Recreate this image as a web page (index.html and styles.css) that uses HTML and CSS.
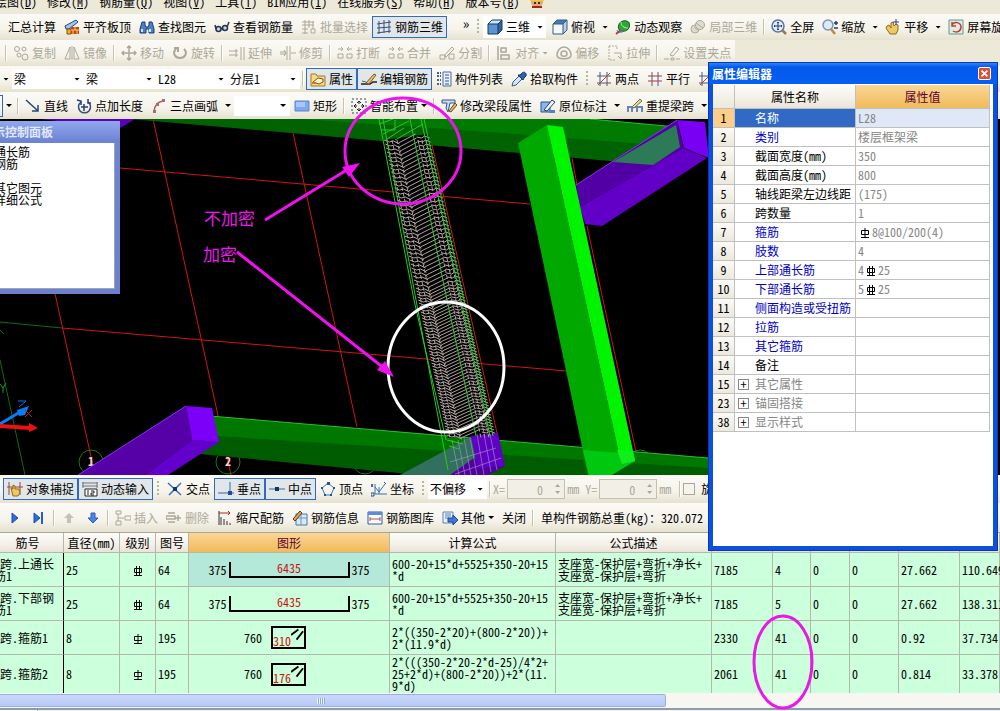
FILE: index.html
```html
<!DOCTYPE html>
<html lang="zh-CN">
<head>
    <meta charset="UTF-8">
    <meta name="viewport" content="width=device-width, initial-scale=1.0">
    <title>钢筋三维</title>
    <link rel="stylesheet" href="styles.css">
</head>
<body>

    <!-- Icon set -->
    <svg class="icon-defs" aria-hidden="true">
        <symbol id="i-level" viewBox="0 0 16 16"><path d="M1 7L12 1l2 2-9 7H2z" fill="#9cc4ee" stroke="#234a86"/><path d="M3 10h4v5H3z" fill="#f5b32a" stroke="#8a4a10"/><path d="M7 8h8v7H7z" fill="#c8401c"/><path d="M7 11h8M11 8v3M9 11v4M13 11v4" stroke="#ffd060"/></symbol>
        <symbol id="i-find" viewBox="0 0 16 16"><path d="M3 3h3v3l1 2h2l1-2V3h3l2 7v4h-5v-4H7v4H1v-4z" fill="#4f7fc4" stroke="#1c3a74"/><path d="M3 10v3M11 10v3" stroke="#cfe3ff" stroke-width="2"/></symbol>
        <symbol id="i-glasses" viewBox="0 0 16 16"><g fill="#c9d6e6" stroke="#26364c" stroke-width="1.5"><circle cx="4.500" cy="10" r="2.500"/><circle cx="11" cy="9" r="2.500"/><path d="M2 10L1 6M13 8l2-5M7 10l2-1" fill="none"/></g></symbol>
        <symbol id="i-batch" viewBox="0 0 16 16"><path d="M1 3h12M1 6h12M4 1v14M8 1v8M12 2v8M1 10h6M1 14h6M10 10h4v4h-4z" fill="none" stroke="currentColor"/></symbol>
        <symbol id="i-rebar3d" viewBox="0 0 16 16"><path d="M3 2v13M8 1v13M13 1v13M1 5l14-2M1 9l14-1M1 14l14-2" fill="none" stroke="#36507c"/></symbol>
        <symbol id="i-cube" viewBox="0 0 16 16"><path d="M1 5h10v10H1z" fill="#5b94cf"/><path d="M1 5l4-4h10l-4 4z" fill="#cfe5f8"/><path d="M11 5l4-4v10l-4 4z" fill="#2f649e"/><path d="M1 5h10v10H1zM1 5l4-4h10l-4 4M15 1v10l-4 4" fill="none" stroke="#18395f"/></symbol>
        <symbol id="i-top" viewBox="0 0 16 16"><path d="M1 5h10v10H1z" fill="#f2f7fc"/><path d="M1 5l4-4h10l-4 4z" fill="#3f7bbd"/><path d="M11 5l4-4v10l-4 4z" fill="#b8cfe6"/><path d="M1 5h10v10H1zM1 5l4-4h10l-4 4M15 1v10l-4 4" fill="none" stroke="#385a80"/></symbol>
        <symbol id="i-orbit" viewBox="0 0 16 16"><ellipse cx="9" cy="7" rx="6" ry="5" fill="#2fa63c" stroke="#136a20" transform="rotate(-35 9 7)"/><path d="M6 3c0 4 3 6 7 6" stroke="#b8f0a0" fill="none"/><path d="M1 15l5-4" stroke="#b04030" stroke-width="2"/><path d="M2 11c0 3 4 3 7 1" stroke="#3a6fd0" fill="none"/></symbol>
        <symbol id="i-part" viewBox="0 0 16 16"><g fill="#dedccf" stroke="currentColor"><circle cx="5" cy="10" r="4"/><circle cx="10" cy="6" r="4.500"/><path d="M6 4l7 5M4 8l5 4" fill="none"/></g></symbol>
        <symbol id="i-full" viewBox="0 0 16 16"><circle cx="7" cy="7" r="6" fill="#e4eefb" stroke="#5673a4" stroke-width="1.500"/><path d="M7 3v8M3 7h8M6 4l1-1 1 1M6 10l1 1 1-1M4 6L3 7l1 1M10 6l1 1-1 1" stroke="#1b3c80" fill="none"/><path d="M11 11l4 4" stroke="#a07840" stroke-width="2.500"/></symbol>
        <symbol id="i-zoom" viewBox="0 0 16 16"><circle cx="6" cy="6" r="5" fill="#dce9f8" stroke="#7f94b4" stroke-width="1.500"/><path d="M9 10l4 5" stroke="#b98a3c" stroke-width="2.500"/><path d="M12 4h4M14 2v4M12 9h4" stroke="#1d3e80" stroke-width="1.500"/></symbol>
        <symbol id="i-pan" viewBox="0 0 16 16"><path d="M2 7l2-1 2 3V4l2-1 1 4 2-2 2 1v5l-2 4H5l-4-6z" fill="#efc862" stroke="#8c6a1c"/><path d="M11 0v6M8 3h6" stroke="#27488a"/></symbol>
        <symbol id="i-spin" viewBox="0 0 16 16"><path d="M1 1h14v14H1z" fill="#d8efe4" stroke="#5b9c8c"/><path d="M4 6c2-4 9-3 9 2s-5 6-8 4M4 3v4h4" fill="none" stroke="#d0342c" stroke-width="1.500"/></symbol>
        <symbol id="i-copy" viewBox="0 0 16 16"><g fill="none" stroke="currentColor"><circle cx="4" cy="4" r="2.500"/><circle cx="11" cy="4" r="2"/><circle cx="6" cy="10" r="2"/><circle cx="12" cy="12" r="3"/></g></symbol>
        <symbol id="i-mirror" viewBox="0 0 16 16"><path d="M6 2v12H1zM10 2v12h5zM8 1v14" fill="none" stroke="currentColor"/></symbol>
        <symbol id="i-move" viewBox="0 0 16 16"><path d="M8 1v14M1 8h14M6 3l2-2 2 2M6 13l2 2 2-2M3 6L1 8l2 2M13 6l2 2-2 2" fill="none" stroke="currentColor" stroke-width="1.500"/></symbol>
        <symbol id="i-rotate" viewBox="0 0 16 16"><path d="M4 4c-4 4-1 9 4 9s8-5 4-9M2 3h4v4" fill="none" stroke="currentColor" stroke-width="2"/></symbol>
        <symbol id="i-extend" viewBox="0 0 16 16"><path d="M0 6h9M0 10h9M7 4v8M12 2v13M15 2v13" fill="none" stroke="currentColor"/></symbol>
        <symbol id="i-trim" viewBox="0 0 16 16"><path d="M0 7h6M0 9h6M7 1v14M10 1v14M11 8h5M4 5l2 3-2 3" fill="none" stroke="currentColor"/></symbol>
        <symbol id="i-break" viewBox="0 0 16 16"><path d="M1 4h5M10 4h5M4 2l2 2-2 2M12 2l-2 2 2 2M1 9h5v4H1zM10 9h5v4h-5z" fill="none" stroke="currentColor"/></symbol>
        <symbol id="i-split" viewBox="0 0 16 16"><path d="M1 10h5v4H1zM10 9h5v5h-5zM5 11l8-9 2 2-8 8z" fill="none" stroke="currentColor"/></symbol>
        <symbol id="i-align" viewBox="0 0 16 16"><path d="M2 1v14M5 3h5v4H5zM5 10h8v4H5z" fill="none" stroke="currentColor" stroke-width="1.500"/></symbol>
        <symbol id="i-offset" viewBox="0 0 16 16"><path d="M1 10c0-4 3-8 7-8s7 4 7 8c0 5-14 5-14 0zM5 9c0-4 6-4 6 0 0 3-6 3-6 0z" fill="none" stroke="currentColor" stroke-width="1.500"/></symbol>
        <symbol id="i-stretch" viewBox="0 0 16 16"><path d="M2 1h8v4M2 1v14h7" fill="none" stroke="currentColor" stroke-dasharray="2 1"/><path d="M7 8h7v6M11 11l3 3" fill="none" stroke="currentColor"/></symbol>
        <symbol id="i-grip" viewBox="0 0 16 16"><path d="M0 14h5M7 13h3v2H7zM12 14h4M6 10l6-8 3 2-6 7z" fill="none" stroke="currentColor"/></symbol>
        <symbol id="i-prop" viewBox="0 0 16 16"><path d="M1 3h5l1 2h8v10H1z" fill="#f7d98a" stroke="#a47a24"/><path d="M3 11l5-4 5 1v3l-4 2z" fill="#fff3cf" stroke="#7a5818"/><path d="M2 12h4" stroke="#d07830" stroke-width="2"/></symbol>
        <symbol id="i-edit" viewBox="0 0 16 16"><path d="M0 13h9l3-2h4" stroke="#222" stroke-width="1.500" fill="none"/><path d="M5 12l8-9 2 1-7 9z" fill="#eac06a" stroke="#7a5a1c"/><path d="M1 10l4 1" stroke="#355fa8"/></symbol>
        <symbol id="i-list" viewBox="0 0 16 16"><path d="M1 2h4M1 5h4M1 9h4M1 13h4" stroke="#45628e" stroke-width="2" stroke-dasharray="2 1"/><path d="M7 1h8v14H7z" fill="#e8f0fb" stroke="#4b6ca0"/><path d="M9 4h4M9 7h4M9 10h4M9 13h4" stroke="#2f57a4"/></symbol>
        <symbol id="i-pick" viewBox="0 0 16 16"><path d="M1 15l1-4 6-6 3 3-6 6z" fill="#d4e8fa" stroke="#37598e"/><path d="M7 4l5 5 1-2 2-2c1-3-2-5-4-3L9 4z" fill="#2a62b4" stroke="#163a70"/></symbol>
        <symbol id="i-twopt" viewBox="0 0 16 16"><path d="M4 1v14M11 1v14M1 5h14M1 12h14" stroke="#4b5a78"/><path d="M2 14L14 2" stroke="#c04038"/></symbol>
        <symbol id="i-parallel" viewBox="0 0 16 16"><path d="M5 1v14M11 1v14" stroke="#4b5a98"/><path d="M1 5h14M1 10h14" stroke="#b03a3a"/></symbol>
        <symbol id="i-line" viewBox="0 0 16 16"><path d="M1 2l11 10M7 13h6V7" fill="none" stroke="#27467e" stroke-width="1.500"/></symbol>
        <symbol id="i-ptlen" viewBox="0 0 16 16"><path d="M5 4a6 6 0 1 0 7 0" fill="none" stroke="#3a4e7a" stroke-width="1.500"/><path d="M8 6v7M5 9h7M1 2l4 1v4M12 1v4h3" stroke="#20407c" stroke-width="1.500" fill="none"/></symbol>
        <symbol id="i-arc" viewBox="0 0 16 16"><path d="M3 14C3 8 7 3 13 3" fill="none" stroke="#c65040" stroke-width="1.500"/><path d="M2 12h3v3H2zM5 5h3v3H5zM11 1h3v3h-3z" fill="#8a7a84"/></symbol>
        <symbol id="i-rect" viewBox="0 0 16 16"><path d="M1 3h14v10H1z" fill="#7fa8ee" stroke="#5a80d0"/><path d="M2 4h9v5H2z" fill="#a8c6f8"/></symbol>
        <symbol id="i-smart" viewBox="0 0 16 16"><path d="M1 1h14v14H1z" fill="none" stroke="#30486e" stroke-dasharray="2 2"/><path d="M8 3v3M8 10v3M3 8h3M10 8h3M6 5l2-2 2 2M6 11l2 2 2-2M5 6L3 8l2 2M11 6l2 2-2 2" stroke="#222" fill="none"/></symbol>
        <symbol id="i-modify" viewBox="0 0 16 16"><path d="M1 2h13v3H9L7 14 5 10l1-5H1z" fill="#c8dcf4" stroke="#30568c"/><path d="M8 13l6-8 2 2-6 7z" fill="#e8b860" stroke="#68481c"/></symbol>
        <symbol id="i-mark" viewBox="0 0 16 16"><path d="M1 4h9v10H1z" fill="#8fb6ea" stroke="#26529c"/><path d="M4 12l8-10 3 2-8 9z" fill="#f4f8ff" stroke="#24406c"/><path d="M9 12h6v3H9z" fill="#5580c0"/></symbol>
        <symbol id="i-span" viewBox="0 0 16 16"><path d="M1 14V9h14v5M5 9v5M10 9v5" fill="none" stroke="#6486b8" stroke-width="2"/><path d="M5 9l8-8 2 2-8 7z" fill="#e4d7a4" stroke="#70704c"/></symbol>
        <symbol id="i-catch" viewBox="0 0 16 16"><path d="M2 1v13M13 1v13M0 6h16" stroke="#a0403c"/><path d="M4 7l2 1V4l2 1v3h4l1 4-2 3H6z" fill="#f0c860" stroke="#8c6a1c"/></symbol>
        <symbol id="i-dyn" viewBox="0 0 16 16"><path d="M0 2h16M0 5h16M1 1v6M15 1v6" stroke="#777"/><path d="M3 8h12v7H3z" fill="#fff" stroke="#222"/><path d="M6 9v5M9 10h3v2H9v2h3" fill="none" stroke="#222"/></symbol>
        <symbol id="i-cross" viewBox="0 0 16 16"><path d="M1 2l13 12M14 2L2 14" stroke="#3470b8" stroke-width="1.500"/><path d="M6 6h4v4H6z" fill="#14346c"/></symbol>
        <symbol id="i-perp" viewBox="0 0 16 16"><path d="M0 12h16M12 1v11" stroke="#3a68a8"/><path d="M10 10h4v4h-4z" fill="#1d4ea4"/></symbol>
        <symbol id="i-mid" viewBox="0 0 16 16"><path d="M0 8h16" stroke="#3a68a8"/><path d="M6 6h4v4H6z" fill="#14346c"/></symbol>
        <symbol id="i-vertex" viewBox="0 0 16 16"><path d="M8 2l6 5-3 7H5L2 7z" fill="none" stroke="#3a78b8"/><path d="M7 1h3v3H7zM13 6h2v2h-2zM1 6h2v2H1zM4 13h2v2H4zM10 13h2v2h-2z" fill="#2454a0"/></symbol>
        <symbol id="i-coord" viewBox="0 0 16 16"><path d="M4 3v10h12M4 6l4 5 6-8M8 6v7" fill="none" stroke="#3470b8"/><path d="M0 3l2 3M2 3L0 6M13 1l2 2M0 12h3v3H0z" fill="none" stroke="#244a88"/></symbol>
        <symbol id="i-next" viewBox="0 0 16 16"><path d="M5 3l6 5-6 5z" fill="#2c6ce0" stroke="#1c4cae"/></symbol>
        <symbol id="i-last" viewBox="0 0 16 16"><path d="M3 3l6 5-6 5z" fill="#2c6ce0" stroke="#1c4cae"/><path d="M11 2v12" stroke="#2c5cc8" stroke-width="2"/></symbol>
        <symbol id="i-up" viewBox="0 0 16 16"><path d="M8 3l5 5h-3v5H6V8H3z" fill="#c4c2b6"/></symbol>
        <symbol id="i-down" viewBox="0 0 16 16"><path d="M8 13l5-5h-3V3H6v5H3z" fill="#4c84ec" stroke="#2a5cc0"/></symbol>
        <symbol id="i-insert" viewBox="0 0 16 16"><path d="M1 1h5v3H1zM1 11h5v4H1zM3 4v7M3 8h6M10 6h6v4h-6z" fill="none" stroke="currentColor"/></symbol>
        <symbol id="i-delete" viewBox="0 0 16 16"><path d="M2 3h7M0 6h9v3H0zM2 12h7M9 8h6M12 5v6" fill="none" stroke="currentColor" stroke-width="1.500"/></symbol>
        <symbol id="i-scale" viewBox="0 0 16 16"><path d="M2 1v14M4 7v8M7 9v6M10 11v4M13 13v2" stroke="#333"/><path d="M2 3h11M11 1l2 2-2 2" stroke="#b82820" fill="none"/></symbol>
        <symbol id="i-info" viewBox="0 0 16 16"><path d="M4 4h11v11H4z" fill="#dbe8f8" stroke="#4474b8"/><path d="M4 8h11M9 4v11" stroke="#6a94cc"/><path d="M1 9l7-8 2 2-7 8z" fill="#d8a850" stroke="#5c3c10"/></symbol>
        <symbol id="i-lib" viewBox="0 0 16 16"><path d="M1 2h14v12H1z" fill="#fff" stroke="#2a5cae"/><path d="M1 2h14v3H1z" fill="#5a8edc"/><path d="M3 9h10M3 7v4M13 7v4" stroke="#b05040"/></symbol>
        <symbol id="i-other" viewBox="0 0 16 16"><path d="M1 2h10v11H1z" fill="#e8f0fc" stroke="#6080b4"/><path d="M3 4h6M3 6h6M3 8h4" stroke="#6080b4"/><path d="M6 8h5V5l5 5-5 5v-3H6z" fill="#3c78dc" stroke="#1c4898"/></symbol>
        <symbol id="rebar1" viewBox="0 0 10 10"><path d="M1.500 2.500h7v4h-7zM5 0v10M1 9.500h8" fill="none" stroke="#000"/></symbol>
        <symbol id="rebar2" viewBox="0 0 10 10"><path d="M1.500 2.500h7v4h-7zM3.500 0v10M6.500 0v10M1 9.500h8" fill="none" stroke="#000"/></symbol>
    </svg>

    <div class="app">
        <nav class="menu">
            <a href="#">绘图(<u>D</u>)</a>
            <a href="#">修改(<u>M</u>)</a>
            <a href="#">钢筋量(<u>Q</u>)</a>
            <a href="#">视图(<u>V</u>)</a>
            <a href="#">工具(<u>T</u>)</a>
            <a href="#">BIM应用(<u>I</u>)</a>
            <a href="#">在线服务(<u>S</u>)</a>
            <a href="#">帮助(<u>H</u>)</a>
            <a href="#">版本号(<u>B</u>)</a>
            <svg class="icon" viewBox="0 0 16 16"><circle cx="8" cy="8" r="6" fill="#e8a878"/><path d="M1 7c1-8 13-8 14 0z" fill="#f4cc20"/><path d="M3 12h10v2H3z" fill="#a02818"/><path d="M5 9h2M9 9h2" stroke="#333" stroke-width="2"/></svg>
        </nav>

        <div class="bar first">
            <button class="tool">汇总计算</button>
            <button class="tool"><svg class="icon"><use href="#i-level"/></svg>平齐板顶</button>
            <button class="tool"><svg class="icon"><use href="#i-find"/></svg>查找图元</button>
            <button class="tool"><svg class="icon"><use href="#i-glasses"/></svg>查看钢筋量</button>
            <button class="tool" disabled><svg class="icon"><use href="#i-batch"/></svg>批量选择</button>
            <button class="tool pressed"><svg class="icon"><use href="#i-rebar3d"/></svg>钢筋三维</button>
            <button class="more" aria-label="更多">»</button>
            <span class="grip"></span>
            <div class="split">
                <button class="tool"><svg class="icon"><use href="#i-cube"/></svg>三维</button>
                <button class="drop" aria-label="三维选项"></button>
            </div>
            <button class="tool"><svg class="icon"><use href="#i-top"/></svg>俯视</button>
            <button class="drop" aria-label="俯视选项"></button>
            <button class="tool"><svg class="icon"><use href="#i-orbit"/></svg>动态观察</button>
            <button class="tool" disabled><svg class="icon"><use href="#i-part"/></svg>局部三维</button>
            <span class="sep"></span>
            <button class="tool"><svg class="icon"><use href="#i-full"/></svg>全屏</button>
            <button class="tool"><svg class="icon"><use href="#i-zoom"/></svg>缩放</button>
            <button class="drop" aria-label="缩放选项"></button>
            <button class="tool"><svg class="icon"><use href="#i-pan"/></svg>平移</button>
            <button class="drop" aria-label="平移选项"></button>
            <button class="tool"><svg class="icon"><use href="#i-spin"/></svg>屏幕旋转</button>
        </div>

        <div class="bar short">
            <span class="sep"></span>
            <button class="tool" disabled><svg class="icon"><use href="#i-copy"/></svg>复制</button>
            <button class="tool" disabled><svg class="icon"><use href="#i-mirror"/></svg>镜像</button>
            <span class="sep"></span>
            <button class="tool" disabled><svg class="icon"><use href="#i-move"/></svg>移动</button>
            <button class="tool" disabled><svg class="icon"><use href="#i-rotate"/></svg>旋转</button>
            <span class="sep"></span>
            <button class="tool" disabled><svg class="icon"><use href="#i-extend"/></svg>延伸</button>
            <button class="tool" disabled><svg class="icon"><use href="#i-trim"/></svg>修剪</button>
            <span class="sep"></span>
            <button class="tool" disabled><svg class="icon"><use href="#i-break"/></svg>打断</button>
            <button class="tool" disabled><svg class="icon"><use href="#i-break"/></svg>合并</button>
            <button class="tool" disabled><svg class="icon"><use href="#i-split"/></svg>分割</button>
            <span class="sep"></span>
            <button class="tool" disabled><svg class="icon"><use href="#i-align"/></svg>对齐<span class="caret"></span></button>
            <button class="tool" disabled><svg class="icon"><use href="#i-offset"/></svg>偏移</button>
            <button class="tool" disabled><svg class="icon"><use href="#i-stretch"/></svg>拉伸</button>
            <span class="sep"></span>
            <button class="tool" disabled><svg class="icon"><use href="#i-grip"/></svg>设置夹点</button>
        </div>

        <div class="bar">
            <button class="drop" aria-label="楼层"></button>
            <div class="combo"><select aria-label="构件类别"><option>梁</option></select><span class="caret"></span></div>
            <div class="combo"><select aria-label="构件类型"><option>梁</option></select><span class="caret"></span></div>
            <div class="combo"><select aria-label="构件名称"><option>L28</option></select><span class="caret"></span></div>
            <div class="combo"><select aria-label="分层"><option>分层1</option></select><span class="caret"></span></div>
            <span class="sep"></span>
            <button class="tool pressed"><svg class="icon"><use href="#i-prop"/></svg>属性</button>
            <button class="tool pressed"><svg class="icon"><use href="#i-edit"/></svg>编辑钢筋</button>
            <button class="tool"><svg class="icon"><use href="#i-list"/></svg>构件列表</button>
            <button class="tool"><svg class="icon"><use href="#i-pick"/></svg>拾取构件</button>
            <span class="grip"></span>
            <button class="tool"><svg class="icon"><use href="#i-twopt"/></svg>两点</button>
            <button class="tool"><svg class="icon"><use href="#i-parallel"/></svg>平行</button>
            <button class="tool" aria-label="点角"><svg class="icon"><use href="#i-twopt"/></svg></button>
        </div>

        <div class="bar draw">
            <span class="cut"></span>
            <button class="drop" aria-label="绘图选项"></button>
            <span class="sep"></span>
            <button class="tool"><svg class="icon"><use href="#i-line"/></svg>直线</button>
            <button class="tool"><svg class="icon"><use href="#i-ptlen"/></svg>点加长度</button>
            <button class="tool"><svg class="icon"><use href="#i-arc"/></svg>三点画弧</button>
            <button class="drop" aria-label="画弧选项"></button>
            <div class="combo narrow"><select aria-label="半径"><option></option></select><span class="caret"></span></div>
            <button class="tool"><svg class="icon"><use href="#i-rect"/></svg>矩形</button>
            <span class="sep"></span>
            <button class="tool"><svg class="icon"><use href="#i-smart"/></svg>智能布置<span class="caret"></span></button>
            <span class="sep"></span>
            <button class="tool"><svg class="icon"><use href="#i-modify"/></svg>修改梁段属性</button>
            <button class="tool"><svg class="icon"><use href="#i-mark"/></svg>原位标注</button>
            <button class="drop" aria-label="标注选项"></button>
            <button class="tool"><svg class="icon"><use href="#i-span"/></svg>重提梁跨</button>
            <button class="drop" aria-label="梁跨选项"></button>
        </div>

        <!-- 3D view -->
        <div class="view">
            <svg class="scene" viewBox="0 119 1000 356" preserveAspectRatio="xMinYMin slice">
                <g fill="none" stroke="#d41414">
                    <path d="M153 119L231 475M290 119L357 427M52 280L95 475M120 168L530 204M62 328L567 371"/>
                    <path d="M572 158l5 27M587 226L636 452"/>
                </g>
                <path d="M0 322L62 328M0 360L25 475M0 330l4 4" fill="none" stroke="#0c6c1c"/>
                <g fill="none" stroke="#1a7a1a">
                    <circle cx="91" cy="462" r="12"/>
                    <circle cx="228" cy="462" r="12"/>
                    <circle cx="365" cy="462" r="12"/>
                    <circle cx="640" cy="462" r="12"/>
                </g>
                <text class="axis-no" x="91" y="466">1</text>
                <text class="axis-no" x="228" y="466">2</text>

                <path d="M40 119h95l-15 9z" fill="#5a00c0"/>
                <!-- top beam -->
                <path d="M130 119H590L677 127L682 147L655 165z" fill="#006200"/>
                <path d="M300 119H590L677 127L681 147L530 135z" fill="#007a00"/>
                <path d="M590 119L677 127" stroke="#20c020"/>
                <!-- right column -->
                <path d="M576 185L677 120L683 148L580 207z" fill="#5200a6"/>
                <path d="M580 207L683 148L707 158L602 226L585 224z" fill="#6200c8"/>
                <path d="M677 120L705 122L709 158L684 148z" fill="#7a00f4"/>
                <path d="M613 162L676 125L680 147L653 165z" fill="#2c7a56"/>
                <path d="M576 185L677 120" stroke="#8a30ff"/>
                <!-- bottom beam -->
                <path d="M210 416L708 458V475H420L200 454z" fill="#005c00"/>
                <path d="M210 416L708 458V468L217 436z" fill="#007800"/>
                <path d="M210 416L708 458" stroke="#30b830"/>
                <!-- sloping beam -->
                <path d="M518 143L547 125L622 468L588 475z" fill="#00a800"/>
                <path d="M547 125L563 127L635 460L622 468z" fill="#00f400"/>
                <path d="M583 450L633 454L635 461L612 475H589z" fill="#00c810"/>
                <path d="M617 450L633 452L635 461L622 464z" fill="#10ee20"/>
                <!-- left column -->
                <path d="M78 475L186 406L192 440L145 475z" fill="#5600a8"/>
                <path d="M145 475L192 440L219 442L168 475z" fill="#6400cc"/>
                <path d="M186 406L212 408L219 442L192 440z" fill="#7c00f8"/>
                <path d="M78 475L186 406" stroke="#8a30ff"/>
                <!-- middle column -->
                <path d="M400 475L472 436L478 475z" fill="#30705c"/>
                <path d="M450 475L474 458L505 466L488 475z" fill="#5200a0"/>
                <path d="M470 433H498L505 466L478 468z" fill="#6000c4"/>
                <g id="cage"></g>
                <path d="M432 145L497 433" stroke="#c82010"/>
                <g fill="none" stroke="#28c828">
                    <path d="M379 119L414 300L446 440M383 119L416 300L448 470M410 119L447 300L476 436M424 119L464 300L493 436M421 119L461 300L490 436"/>
                    <path d="M379 124l14-5M381 130h14v-10M383 134l26-13M384 141l20-13M395 140l28-16M447 440l16 4M449 446l10 3"/>
                </g>
                <g fill="none" stroke="#a89cc8" stroke-opacity=".6">
                    <path d="M452 440l7 35M458 440l7 35M464 438l7 37M470 438l7 37M477 434l7 41M484 434l7 38M490 434l7 36M450 462l46-14M455 474l46-16"/>
                </g>

                <!-- axes -->
                <path d="M0 424L20 412" stroke="#0a7cf4" stroke-width="3"/>
                <path d="M17 410l12-4-4 9-6 1z" fill="#0a7cf4"/>
                <path d="M0 426L30 428" stroke="#f01010" stroke-width="4"/>
                <path d="M29 423l9 5-9 4z" fill="#f01010"/>
                <path d="M18 401h8l-7 6" fill="none" stroke="#0a7cf4"/>
                <path d="M25 410l7 7M32 410l-7 7" stroke="#c01818"/>
                <path d="M0 384l3 4 3-5M3 388v5" fill="none" stroke="#18a018"/>
            </svg>

            <div class="float control">
                <h2>示控制面板</h2>
                <ul>
                    <li>通长筋</li>
                    <li>钢筋</li>
                    <li>&nbsp;</li>
                    <li>其它图元</li>
                    <li>详细公式</li>
                </ul>
            </div>
        </div>

        <div class="bar snap">
            <button class="tool pressed"><svg class="icon"><use href="#i-catch"/></svg>对象捕捉</button>
            <button class="tool pressed"><svg class="icon"><use href="#i-dyn"/></svg>动态输入</button>
            <span class="grip"></span>
            <button class="tool"><svg class="icon"><use href="#i-cross"/></svg>交点</button>
            <button class="tool pressed"><svg class="icon"><use href="#i-perp"/></svg>垂点</button>
            <button class="tool pressed"><svg class="icon"><use href="#i-mid"/></svg>中点</button>
            <button class="tool"><svg class="icon"><use href="#i-vertex"/></svg>顶点</button>
            <button class="tool"><svg class="icon"><use href="#i-coord"/></svg>坐标</button>
            <span class="grip"></span>
            <div class="combo offset-mode"><select aria-label="偏移方式"><option>不偏移</option></select><span class="caret"></span></div>
            <span class="sep"></span>
            <label class="offset">X=<span class="spin"><input type="text" value="0" disabled><i></i></span>mm</label>
            <label class="offset">Y=<span class="spin"><input type="text" value="0" disabled><i></i></span>mm</label>
            <span class="sep"></span>
            <label class="check"><input type="checkbox">旋转</label>
        </div>

        <div class="bar edit">
            <button class="tool" aria-label="下一个"><svg class="icon"><use href="#i-next"/></svg></button>
            <button class="tool" aria-label="最后"><svg class="icon"><use href="#i-last"/></svg></button>
            <span class="sep"></span>
            <button class="tool" aria-label="上移" disabled><svg class="icon"><use href="#i-up"/></svg></button>
            <button class="tool" aria-label="下移"><svg class="icon"><use href="#i-down"/></svg></button>
            <span class="sep"></span>
            <button class="tool" disabled><svg class="icon"><use href="#i-insert"/></svg>插入</button>
            <button class="tool" disabled><svg class="icon"><use href="#i-delete"/></svg>删除</button>
            <button class="tool"><svg class="icon"><use href="#i-scale"/></svg>缩尺配筋</button>
            <button class="tool"><svg class="icon"><use href="#i-info"/></svg>钢筋信息</button>
            <button class="tool"><svg class="icon"><use href="#i-lib"/></svg>钢筋图库</button>
            <button class="tool"><svg class="icon"><use href="#i-other"/></svg>其他<span class="caret"></span></button>
            <button class="tool">关闭</button>
            <span class="sep"></span>
            <span class="total">单构件钢筋总重(kg)：320.072</span>
        </div>

        <!-- Rebar table -->
        <div class="sheet">
            <table class="rebar">
                <colgroup>
                    <col class="w72"><col class="w56"><col class="w36"><col class="w33"><col class="w201"><col class="w166"><col class="w156">
                    <col class="w61"><col class="w38"><col class="w39"><col class="w49"><col class="w61"><col>
                </colgroup>
                <thead>
                    <tr>
                        <th>筋号</th><th>直径(mm)</th><th>级别</th><th>图号</th><th class="hot">图形</th><th>计算公式</th><th>公式描述</th>
                        <th></th><th></th><th></th><th></th><th></th><th></th>
                    </tr>
                </thead>
                <tbody>
                    <tr>
                        <td class="name">1跨.上通长<br>筋1</td><td>25</td><td class="mid"><svg class="bar-sign"><use href="#rebar2"/></svg></td><td>64</td>
                        <td class="hot"><div class="shape">375<span class="hook">6435</span>375</div></td>
                        <td>600-20+15*d+5525+350-20+15<br>*d</td><td>支座宽-保护层+弯折+净长+<br>支座宽-保护层+弯折</td>
                        <td>7185</td><td>4</td><td>0</td><td>0</td><td>27.662</td><td>110.649</td>
                    </tr>
                    <tr>
                        <td class="name">1跨.下部钢<br>筋1</td><td>25</td><td class="mid"><svg class="bar-sign"><use href="#rebar2"/></svg></td><td>64</td>
                        <td><div class="shape">375<span class="hook">6435</span>375</div></td>
                        <td>600-20+15*d+5525+350-20+15<br>*d</td><td>支座宽-保护层+弯折+净长+<br>支座宽-保护层+弯折</td>
                        <td>7185</td><td>5</td><td>0</td><td>0</td><td>27.662</td><td>138.311</td>
                    </tr>
                    <tr>
                        <td class="name">1跨.箍筋1</td><td>8</td><td class="mid"><svg class="bar-sign"><use href="#rebar1"/></svg></td><td>195</td>
                        <td><div class="shape stirrup">760<span class="box">310<svg viewBox="0 0 14 13"><path d="M0 7L8 1M6 12L13 3" stroke="#000" stroke-width="2"/></svg></span></div></td>
                        <td>2*((350-2*20)+(800-2*20))+<br>2*(11.9*d)</td><td></td>
                        <td>2330</td><td>41</td><td>0</td><td>0</td><td>0.92</td><td>37.734</td>
                    </tr>
                    <tr class="tall">
                        <td class="name">1跨.箍筋2</td><td>8</td><td class="mid"><svg class="bar-sign"><use href="#rebar1"/></svg></td><td>195</td>
                        <td><div class="shape stirrup">760<span class="box">176<svg viewBox="0 0 14 13"><path d="M0 7L8 1M6 12L13 3" stroke="#000" stroke-width="2"/></svg></span></div></td>
                        <td>2*(((350-2*20-2*d-25)/4*2+<br>25+2*d)+(800-2*20))+2*(11.<br>9*d)</td><td></td>
                        <td>2061</td><td>41</td><td>0</td><td>0</td><td>0.814</td><td>33.378</td>
                    </tr>
                </tbody>
            </table>
        </div>
        <div class="scroll"><div class="thumb"></div></div>
        <div class="tabs"><span></span></div>
    </div>

    <!-- Property editor -->
    <div class="float props">
        <div class="title"><h2>属性编辑器</h2><button class="close" aria-label="关闭"><svg viewBox="0 0 13 13"><path d="M3 3l7 7M10 3l-7 7" stroke="#fff" stroke-width="2"/></svg></button></div>
        <div class="props-body">
            <table>
                <thead><tr><th></th><th>属性名称</th><th class="hot">属性值</th></tr></thead>
                <tbody>
                    <tr class="sel"><th>1</th><td>名称</td><td>L28</td></tr>
                    <tr class="pub"><th>2</th><td>类别</td><td>楼层框架梁</td></tr>
                    <tr><th>3</th><td>截面宽度(mm)</td><td>350</td></tr>
                    <tr><th>4</th><td>截面高度(mm)</td><td>800</td></tr>
                    <tr><th>5</th><td>轴线距梁左边线距</td><td>(175)</td></tr>
                    <tr><th>6</th><td>跨数量</td><td>1</td></tr>
                    <tr class="pub"><th>7</th><td>箍筋</td><td><svg class="bar-sign"><use href="#rebar1"/></svg>8@100/200(4)</td></tr>
                    <tr class="pub"><th>8</th><td>肢数</td><td>4</td></tr>
                    <tr class="pub"><th>9</th><td>上部通长筋</td><td>4<svg class="bar-sign"><use href="#rebar2"/></svg>25</td></tr>
                    <tr class="pub"><th>10</th><td>下部通长筋</td><td>5<svg class="bar-sign"><use href="#rebar2"/></svg>25</td></tr>
                    <tr class="pub"><th>11</th><td>侧面构造或受扭筋</td><td></td></tr>
                    <tr class="pub"><th>12</th><td>拉筋</td><td></td></tr>
                    <tr class="pub"><th>13</th><td>其它箍筋</td><td></td></tr>
                    <tr><th>14</th><td>备注</td><td></td></tr>
                    <tr class="group"><th>15</th><td><button aria-label="展开">+</button>其它属性</td><td></td></tr>
                    <tr class="group"><th>23</th><td><button aria-label="展开">+</button>锚固搭接</td><td></td></tr>
                    <tr class="group"><th>38</th><td><button aria-label="展开">+</button>显示样式</td><td></td></tr>
                </tbody>
            </table>
        </div>
    </div>

    <!-- Notes drawn over the window -->
    <svg class="notes" viewBox="0 0 1000 711" preserveAspectRatio="xMinYMin slice">
        <g fill="none" stroke="#f010f0" stroke-width="3">
            <ellipse cx="403" cy="151" rx="58" ry="53"/>
            <path d="M265 220L350 168M237 252L385 369"/>
        </g>
        <ellipse cx="446" cy="367" rx="58" ry="65" fill="none" stroke="#fff" stroke-width="3"/>
        <ellipse cx="783" cy="662" rx="29" ry="46" fill="none" stroke="#e818e8" stroke-width="3"/>
        <path d="M360 163l-18 4 7 10zM394 377l-17-7 8-9z" fill="#f010f0"/>
        <text x="204" y="225">不加密</text>
        <text x="203" y="261">加密</text>
    </svg>

    <script>
        // stirrups of the beam: wide spacing in the span, tight spacing near the support
        const cage = document.getElementById('cage');
        let sides = '';
        let tops = '';
        let y = 140;
        while (y < 436) {
            const t = (y - 119) / 317;
            const x = 380 + 67 * t;
            const w = 45 + 3 * t;
            sides += `M${x} ${y}l5 2l4 -1l6 3M${x + w - 13} ${y - 3}l5 1l3 -2l5 2`;
            tops += `M${x + 14} ${y + 3}L${x + w - 14} ${y - 6}`;
            y += y < 285 ? 4 : 3;
        }
        const rods = [3, 8, 13, 34, 38, 42].map(d => `M${384 + d} 140L${447 + d} 438`).join('');
        cage.innerHTML = `<path d="M383 140L428 134L492 434L448 438z" fill="#000"/>
            <path d="${tops}" fill="none" stroke="#aca09c"/>
            <path d="${sides}" fill="none" stroke="#b8aaa6"/>
            <path d="${rods}" fill="none" stroke="#aca09c" stroke-dasharray="4 2"/>`;
    </script>

</body>
</html>
```

FILE: styles.css
```css
* {
    box-sizing: border-box;
}

body {
    margin: 0;
    height: 100vh;
    overflow: hidden;
    position: relative;
    background-color: #ece9d8;
    color: #000;
    font-family: "Noto Sans CJK SC", sans-serif;
    font-feature-settings: "hwid";
    font-size: 12px;
    line-height: 12px;
    white-space: nowrap;
}

button, input, select {
    font: inherit;
    font-feature-settings: inherit;
    color: inherit;
    margin: 0;
}

button {
    background: none;
    border: 0;
    padding: 0;
    cursor: pointer;
}

h2 {
    margin: 0;
    font-size: 12px;
    font-weight: bold;
}

.icon-defs {
    display: none;
}

.icon {
    width: 16px;
    height: 16px;
    flex: none;
}

.app {
    margin-top: -10px;
}

.menu {
    display: flex;
    align-items: center;
    gap: 10px;
    height: 24px;
    margin-left: -5px;
}

.menu a {
    color: #000;
    text-decoration: none;
}

/* Toolbars */
.bar {
    display: flex;
    align-items: center;
    height: 26px;
    background: linear-gradient(#fbfaf6, #f5f3ea 60%, #e6e2d0);
    overflow: hidden;
}

.bar > * {
    flex: none;
}

.first {
    padding-left: 4px;
}

.short {
    width: fit-content;
    padding-left: 3px;
}

.draw {
    height: 27px;
}

.tool {
    display: flex;
    align-items: center;
    gap: 3px;
    height: 22px;
    padding: 0 4px;
}

.tool:disabled {
    color: #aca899;
}

.pressed {
    background-color: #e1e6e8;
    box-shadow: inset 0 0 0 1px #316ac5;
}

.drop {
    display: flex;
    align-items: center;
    justify-content: center;
    width: 12px;
    height: 22px;
}

.drop::before, .caret {
    content: "";
    width: 6px;
    height: 3px;
    background-color: currentColor;
    clip-path: polygon(0 0, 100% 0, 50% 100%);
}

.split {
    display: flex;
    background-color: #fff;
    margin-right: 2px;
}

.more {
    width: 26px;
    height: 26px;
    padding: 0 0 8px 12px;
    font-size: 14px;
}

.sep {
    width: 2px;
    height: 16px;
    margin: 0 2px;
    border-left: 1px solid #c5c2b0;
    border-right: 1px solid #fff;
}

.grip {
    width: 2px;
    height: 16px;
    margin: 0 4px;
    background: repeating-linear-gradient(#b8b4a2 0 2px, transparent 2px 4px);
}

.cut {
    width: 3px;
    height: 22px;
    border: 1px solid #316ac5;
    border-left: 0;
}

.combo {
    display: grid;
    align-items: center;
    width: 72px;
    height: 20px;
    background-color: #fff;
}

.combo select {
    grid-area: 1 / 1;
    width: 100%;
    height: 20px;
    padding: 0 12px 0 2px;
    border: 0;
    background: none;
    appearance: none;
}

.combo .caret {
    grid-area: 1 / 1;
    justify-self: end;
    margin-right: 4px;
    pointer-events: none;
}

.narrow {
    width: 56px;
}

.offset-mode {
    width: 59px;
}

/* 3D view */
.view {
    position: relative;
    height: 356px;
    background-color: #000;
    overflow: hidden;
}

.scene {
    display: block;
    width: 100%;
    height: 100%;
}

.axis-no {
    fill: #ffd0d0;
    font-size: 12px;
    font-weight: bold;
    text-anchor: middle;
}

.float {
    position: absolute;
    color: #000;
}

.control {
    left: 0;
    top: 2px;
    width: 120px;
    padding: 0 5px 5px 0;
    background: linear-gradient(#8fa8ec, #6d84d4 20px, #6c7fd0);
}

.control h2 {
    height: 22px;
    margin-left: -7px;
    line-height: 22px;
    color: #e0e8fc;
}

.control ul {
    height: 146px;
    margin: 0;
    padding: 3px 0 0;
    list-style: none;
    background-color: #fff;
    border-right: 1px solid #9aa;
    border-bottom: 1px solid #9aa;
}

.control li {
    margin-left: -6px;
}

/* Snap and edit bars */
.snap {
    height: 28px;
    padding-left: 3px;
}

.offset {
    display: flex;
    align-items: center;
    gap: 2px;
    margin-right: 6px;
    color: #aca899;
}

.spin {
    display: flex;
    align-items: center;
    width: 58px;
    height: 20px;
    padding-right: 4px;
    border: 1px solid #c4c0ae;
    background-color: #f2f0e6;
}

.spin input {
    flex: 1;
    min-width: 0;
    padding: 0 12px 0 0;
    border: 0;
    background: none;
    color: #aca899;
    text-align: right;
}

.spin i {
    width: 5px;
    height: 10px;
    background-color: #aca899;
    clip-path: polygon(50% 0, 100% 30%, 0 30%, 0 70%, 100% 70%, 50% 100%, 0 70%, 0 30%);
}

.check {
    display: flex;
    align-items: center;
    gap: 6px;
}

.check input {
    width: 12px;
    height: 12px;
    border: 1px solid #aca899;
    background-color: #f5f3ea;
    appearance: none;
}

.edit {
    height: 29px;
    padding-left: 3px;
}

.total {
    padding-left: 5px;
}

/* Rebar table */
.sheet {
    margin-left: -8px;
    border-top: 1px solid #aaa796;
    overflow: hidden;
}

table {
    border-collapse: separate;
    border-spacing: 0;
    table-layout: fixed;
    width: 100%;
}

th, td {
    padding: 0 2px;
    border-right: 1px solid #b4b8aa;
    border-bottom: 1px solid #b4b8aa;
    text-align: left;
    font-weight: normal;
}

thead th {
    height: 20px;
    padding: 0;
    text-align: center;
    background: linear-gradient(#fdfcf9, #f4f0e8 60%, #ebe3d8);
}

thead .hot {
    color: #600030;
    background: linear-gradient(#fbd698, #f0bb58);
}

.rebar td {
    height: 34px;
    background-color: #ccffdc;
}

.rebar .tall td {
    height: 38px;
    border-bottom: 0;
}

.rebar td.hot {
    background-color: #b4e8d8;
}

.rebar .name {
    border-right: 1px solid #000;
}

.rebar .mid {
    text-align: center;
}

.w72 { width: 72px; }
.w56 { width: 56px; }
.w36 { width: 36px; }
.w33 { width: 33px; }
.w201 { width: 201px; }
.w166 { width: 166px; }
.w156 { width: 156px; }
.w61 { width: 61px; }
.w38 { width: 38px; }
.w39 { width: 39px; }
.w49 { width: 49px; }

.bar-sign {
    width: 10px;
    height: 10px;
    vertical-align: middle;
}

.shape {
    display: flex;
    align-items: center;
    justify-content: center;
    gap: 2px;
}

.hook {
    width: 121px;
    height: 16px;
    border: 2px solid #000;
    border-top: 0;
    color: #d01010;
    text-align: center;
}

.stirrup {
    gap: 9px;
    padding-right: 28px;
}

.box {
    display: flex;
    justify-content: space-between;
    align-items: flex-end;
    width: 35px;
    height: 23px;
    border: 2px solid #000;
    color: #d01010;
}

.box svg {
    width: 13px;
    height: 13px;
    align-self: flex-start;
}

.scroll {
    height: 15px;
    padding-top: 1px;
    background-color: #f8f6f1;
}

.thumb {
    width: 666px;
    max-width: 67%;
    height: 13px;
    border: 1px solid #98b0e4;
    border-left: 0;
    border-radius: 0 2px 2px 0;
    background: repeating-linear-gradient(90deg, #eef4fe 0 1px, #8ca8e8 1px 2px) 317px 3px / 8px 6px no-repeat, linear-gradient(#cad8fc, #b6c8f6);
}

.tabs {
    height: 20px;
    border-top: 2px solid #8c9cb0;
    background-color: #f4f2ea;
}

.tabs span {
    display: block;
    width: 38px;
    height: 20px;
    border-right: 1px solid #8c9cb0;
    background-color: #fff;
}

/* Property editor */
.props {
    top: 62px;
    right: 2px;
    width: 290px;
    height: 489px;
    display: flex;
    flex-direction: column;
    padding: 0 4px 4px;
    border: 1px solid #0838b8;
    background-color: #0c50e0;
}

.title {
    display: flex;
    align-items: center;
    justify-content: space-between;
    height: 21px;
    margin: 0 -4px;
    padding: 0 6px 0 3px;
    color: #fff;
    background: linear-gradient(#2c84fc, #0458ea 20%, #0460f4);
}

.close {
    width: 13px;
    height: 13px;
    border: 1px solid #fff;
    border-radius: 2px;
    background-color: #dc5030;
}

.close svg {
    display: block;
}

.props-body {
    flex: 1;
    padding: 1px 3px 0 0;
    background-color: #fff;
}

.props th, .props td {
    height: 19px;
    border-color: #c0c0c0;
}

.props th:first-child {
    width: 22px;
    padding: 0;
    text-align: center;
    background: linear-gradient(#fbfaf5, #ece8dc);
}

.props thead th {
    height: 24px;
}

.props th:nth-child(2) {
    width: 121px;
}

.props td:nth-child(2) {
    padding: 0 0 0 20px;
}

.props td:nth-child(3) {
    color: #868686;
}

.props .bar-sign {
    margin: 0 2px;
}

.pub td:nth-child(2) {
    color: #0000c8;
}

.props .sel th {
    background: #fcce88;
}

.sel td {
    background-color: #dfe8f6;
}

.sel td:nth-child(2) {
    color: #fff;
    background-color: #316ac5;
}

.props .group td:nth-child(2) {
    padding-left: 3px;
    color: #868686;
}

.group button {
    width: 11px;
    height: 11px;
    margin-right: 6px;
    border: 1px solid #888;
    color: #000;
    line-height: 8px;
}

/* Notes */
.notes {
    position: absolute;
    inset: 0;
    width: 100%;
    height: 100%;
    pointer-events: none;
}

.notes text {
    fill: #e81ce8;
    font-size: 17px;
}
```
